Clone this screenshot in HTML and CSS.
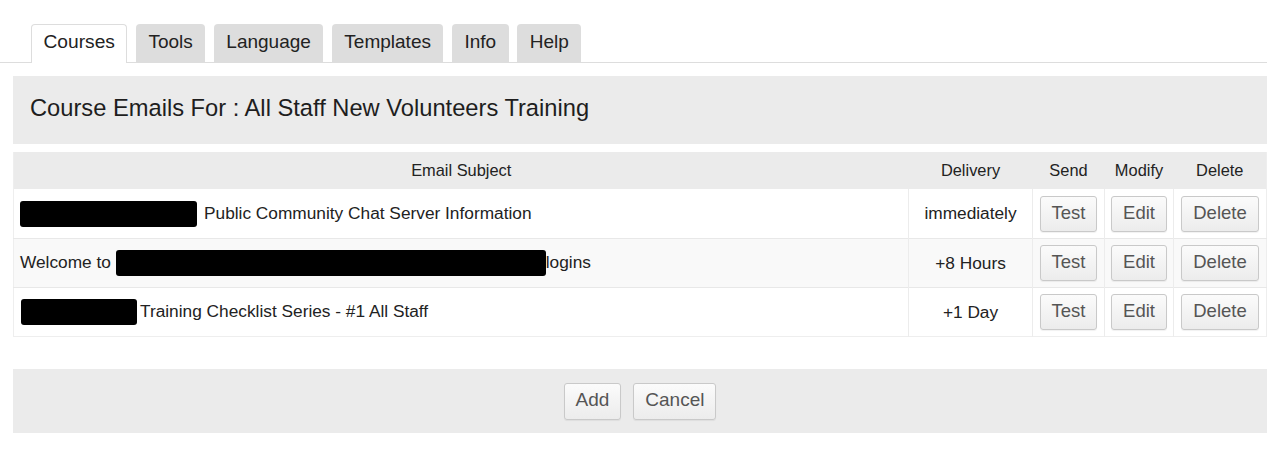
FILE: index.html
```html
<!DOCTYPE html>
<html>
<head>
<meta charset="utf-8">
<link rel="stylesheet" href="styles.css">
</head>
<body>
<div class="page">
  <ul class="tabs">
    <li class="tab active">Courses</li>
    <li class="tab">Tools</li>
    <li class="tab">Language</li>
    <li class="tab">Templates</li>
    <li class="tab">Info</li>
    <li class="tab">Help</li>
  </ul>
  <div class="content">
    <div class="heading">Course Emails For : All Staff New Volunteers Training</div>
    <table class="emails">
      <colgroup>
        <col class="c-subject"><col class="c-delivery"><col class="c-send"><col class="c-modify"><col class="c-delete">
      </colgroup>
      <thead>
        <tr><th>Email Subject</th><th>Delivery</th><th>Send</th><th>Modify</th><th>Delete</th></tr>
      </thead>
      <tbody>
        <tr>
          <td class="subject"><span class="redact r1"></span><span class="after1">Public Community Chat Server Information</span></td>
          <td class="delivery">immediately</td>
          <td class="act"><button class="btn">Test</button></td>
          <td class="act"><button class="btn">Edit</button></td>
          <td class="act"><button class="btn">Delete</button></td>
        </tr>
        <tr class="alt">
          <td class="subject">Welcome to <span class="redact r2"></span>logins</td>
          <td class="delivery">+8 Hours</td>
          <td class="act"><button class="btn">Test</button></td>
          <td class="act"><button class="btn">Edit</button></td>
          <td class="act"><button class="btn">Delete</button></td>
        </tr>
        <tr>
          <td class="subject"><span class="redact r3"></span>Training Checklist Series - #1 All Staff</td>
          <td class="delivery">+1 Day</td>
          <td class="act"><button class="btn">Test</button></td>
          <td class="act"><button class="btn">Edit</button></td>
          <td class="act"><button class="btn">Delete</button></td>
        </tr>
      </tbody>
    </table>
    <div class="footer-bar">
      <button class="btn big">Add</button>
      <button class="btn big">Cancel</button>
    </div>
  </div>
</div>
</body>
</html>
```

FILE: styles.css
```css
html, body {
  margin: 0;
  padding: 0;
  background: #ffffff;
}
body {
  font-family: "Liberation Sans", Arial, sans-serif;
  color: #222222;
}
.page {
  width: 1267px;
}
.tabs {
  list-style: none;
  margin: 0;
  padding: 24px 0 0 31px;
  display: flex;
  gap: 8.5px;
  border-bottom: 1px solid #dddddd;
  height: 38px;
}
.tab {
  height: 38px;
  line-height: 35px;
  padding: 0 12.5px;
  background: #dddddd;
  border-radius: 4px 4px 0 0;
  font-size: 19px;
  color: #222222;
  box-sizing: border-box;
}
.tab.active {
  background: #ffffff;
  border: 1px solid #dddddd;
  border-bottom: none;
  height: 39px;
  padding: 0 11.5px;
  line-height: 34px;
  font-size: 19.2px;
}
.content {
  margin-left: 13px;
}
.heading {
  margin-top: 13px;
  height: 68px;
  background: #ebebeb;
  box-sizing: border-box;
  padding-left: 17px;
  line-height: 65px;
  font-size: 23.7px;
  color: #1e1e1e;
}
.emails {
  margin-top: 8px;
  width: 100%;
  border-collapse: collapse;
  table-layout: fixed;
  border: 1px solid #eeeeee;
  border-top: none;
}
.c-subject { width: 895px; }
.c-delivery { width: 124px; }
.c-send { width: 72px; }
.c-modify { width: 69px; }
.c-delete { width: auto; }
.emails th {
  height: 37px;
  background: #ebebeb;
  font-weight: normal;
  font-size: 16.4px;
  color: #222222;
  padding: 0;
  text-align: center;
}
.emails td {
  height: 48px;
  border-top: 1px solid #e8e8e8;
  border-left: 1px solid #ececec;
  padding: 0;
  font-size: 17.3px;
  background: #ffffff;
}
.emails tbody tr:first-child td {
  border-top: none;
  height: 49px;
}
.emails tr.alt td {
  background: #f9f9f9;
}
.emails td.subject {
  padding-left: 6px;
  text-align: left;
  border-left: none;
  white-space: nowrap;
}
.emails td.delivery {
  text-align: center;
}
.emails td.act {
  text-align: center;
}
.redact {
  display: inline-block;
  background: #000000;
  border-radius: 3px;
  height: 26px;
  vertical-align: middle;
}
.r1 { width: 177px; margin-right: 7px; }
.r2 { width: 430px; }
.r3 { width: 116px; margin-left: 1px; margin-right: 3px; }
.btn {
  font-family: "Liberation Sans", Arial, sans-serif;
  font-size: 18.5px;
  color: #555555;
  height: 36px;
  padding: 0 11px 2px;
  background: linear-gradient(#fbfbfb, #ececec);
  border: 1px solid #c9c9c9;
  border-radius: 3px;
  box-shadow: 0 1px 1px rgba(0,0,0,0.06);
  vertical-align: middle;
}
.footer-bar {
  margin-top: 32px;
  height: 64px;
  background: #ebebeb;
  display: flex;
  justify-content: center;
  align-items: center;
  gap: 12px;
}
.btn.big {
  height: 37px;
  font-size: 19px;
}
```
